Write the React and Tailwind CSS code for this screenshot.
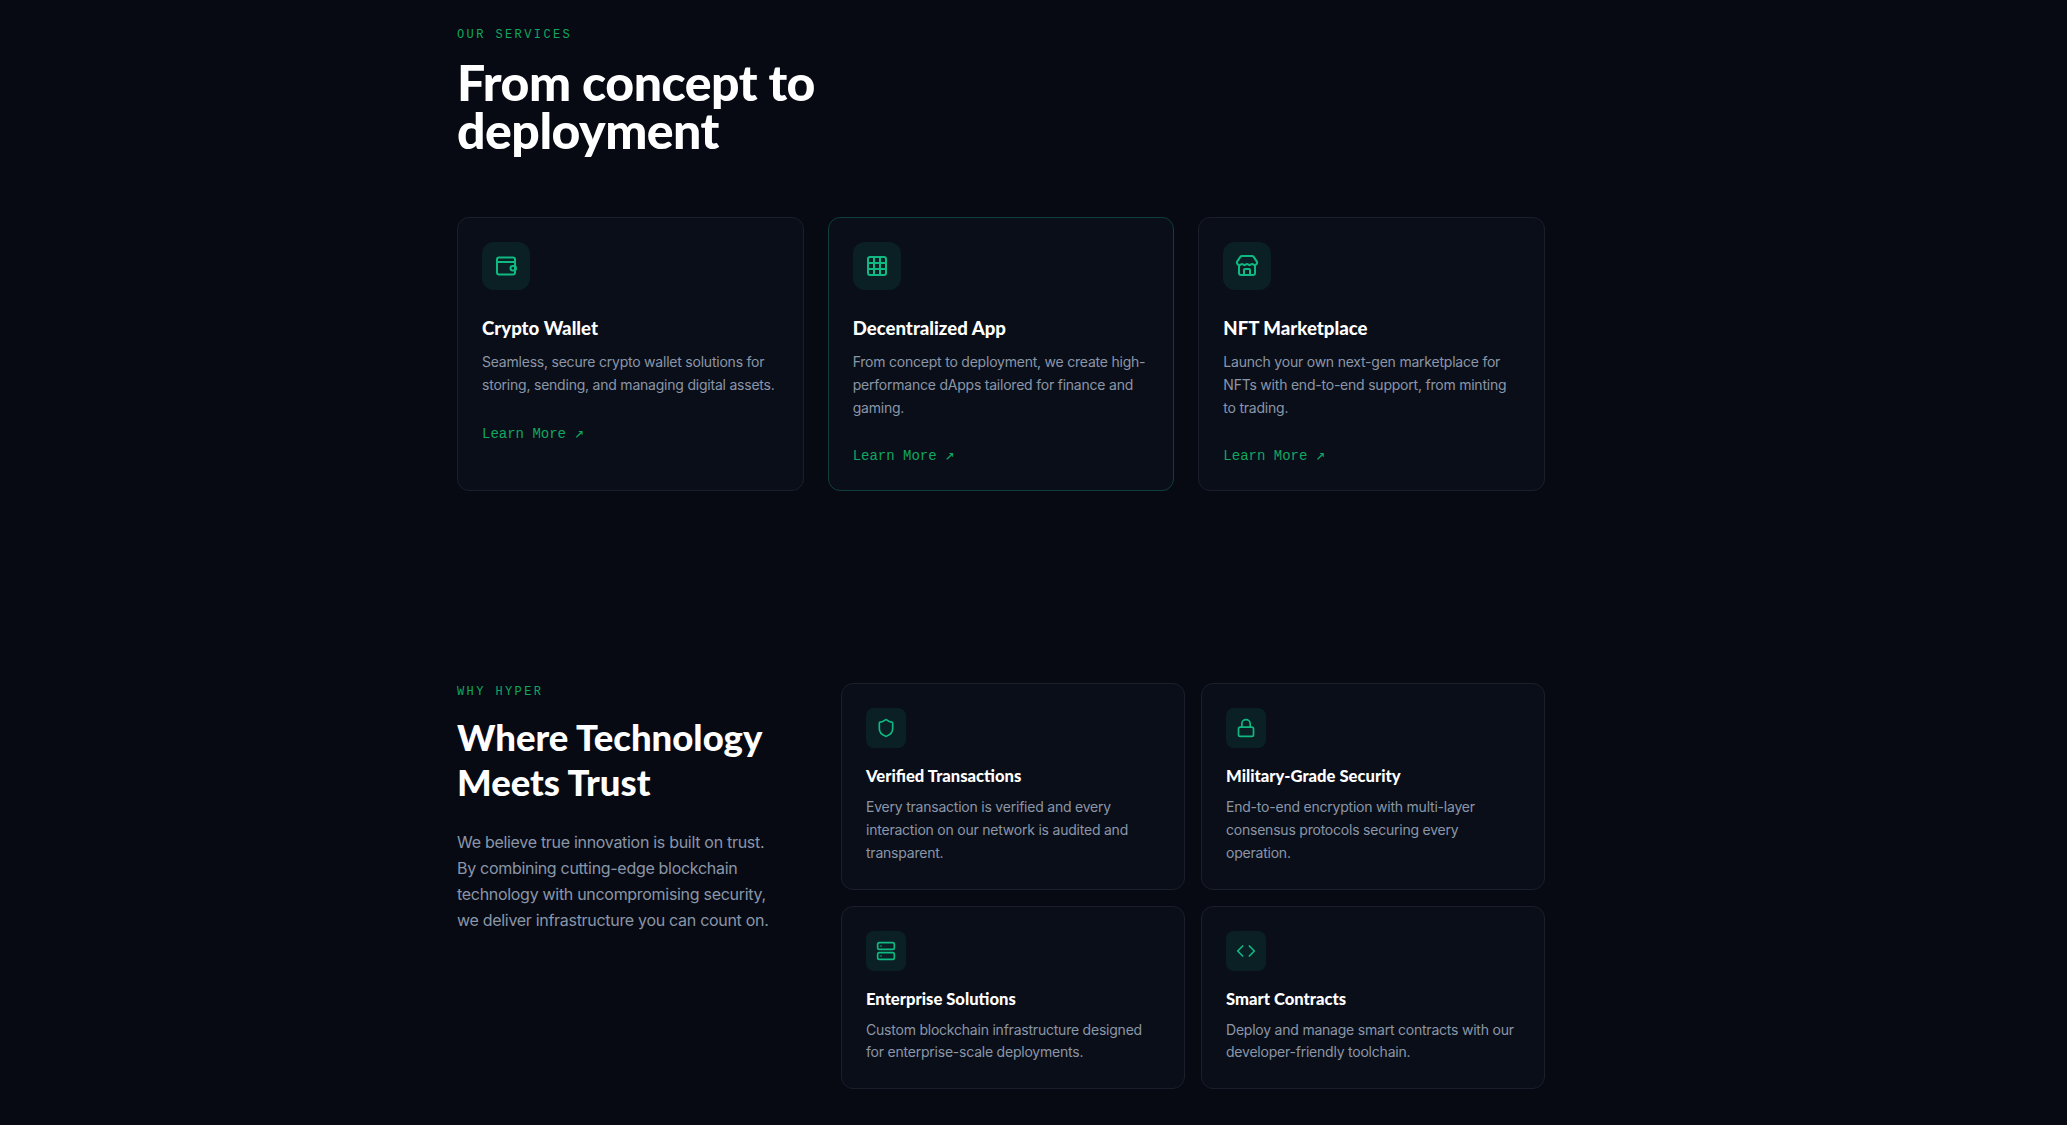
import { Grid3x3, Store, Shield, Lock, Server, Code } from 'lucide-react'

const headingFont = "font-['Lato',sans-serif]"

function WalletIcon({ className }) {
  return (
    <svg className={className} viewBox="0 0 24 24" fill="none" stroke="currentColor" strokeWidth={2} strokeLinecap="round" strokeLinejoin="round">
      <rect x="3" y="3.5" width="18" height="17" rx="2" />
      <path d="M3 8h18" />
      <rect x="16.5" y="12" width="5.5" height="4.5" rx="2.25" />
    </svg>
  )
}

const services = [
  {
    icon: WalletIcon,
    title: 'Crypto Wallet',
    text: 'Seamless, secure crypto wallet solutions for storing, sending, and managing digital assets.',
  },
  {
    icon: Grid3x3,
    title: 'Decentralized App',
    text: 'From concept to deployment, we create high-performance dApps tailored for finance and gaming.',
    active: true,
  },
  {
    icon: Store,
    title: 'NFT Marketplace',
    text: 'Launch your own next-gen marketplace for NFTs with end-to-end support, from minting\nto trading.',
  },
]

const reasons = [
  {
    icon: Shield,
    title: 'Verified Transactions',
    text: 'Every transaction is verified and every interaction on our network is audited and transparent.',
  },
  {
    icon: Lock,
    title: 'Military-Grade Security',
    text: 'End-to-end encryption with multi-layer consensus protocols securing every operation.',
  },
  {
    icon: Server,
    title: 'Enterprise Solutions',
    text: 'Custom blockchain infrastructure designed\nfor enterprise-scale deployments.',
  },
  {
    icon: Code,
    title: 'Smart Contracts',
    text: 'Deploy and manage smart contracts with our developer-friendly toolchain.',
  },
]

function Label({ children }) {
  return (
    <p className="font-['Liberation_Mono',monospace] text-xs leading-4 tracking-[0.2em] text-[#10a760]">
      {children}
    </p>
  )
}

function ServiceCard({ icon: Icon, title, text, active }) {
  return (
    <div
      className={`rounded-xl border bg-[#0a0e18] p-6 ${
        active ? 'border-[#0f3f3a]' : 'border-[#1a1f2b]'
      }`}
    >
      <div className="flex h-12 w-12 items-center justify-center rounded-xl bg-[#0a2025]">
        <Icon className="h-6 w-6 text-[#10b981]" />
      </div>
      <h3 className={`${headingFont} mt-6 text-[18.6px] font-black leading-7 text-white`}>{title}</h3>
      <p className="mt-[9px] whitespace-pre-line text-sm leading-[22.75px] tracking-[-0.22px] text-[#8a96a8]">{text}</p>
      <a className="mt-[27px] block font-['Liberation_Mono',monospace] text-sm leading-5 text-[#10a760]">
        Learn More <span className="font-['DejaVu_Sans_Mono',monospace] text-base leading-none">↗</span>
      </a>
    </div>
  )
}

function ReasonCard({ icon: Icon, title, text }) {
  return (
    <div className="rounded-xl border border-[#1a1f2b] bg-[#0a0e18] p-6">
      <div className="flex h-10 w-10 items-center justify-center rounded-lg bg-[#0a2025]">
        <Icon className="h-5 w-5 text-[#10b981]" />
      </div>
      <h3 className={`${headingFont} mt-4 text-[16.6px] font-black leading-6 text-white`}>{title}</h3>
      <p className="mt-2 whitespace-pre-line text-sm leading-[22.75px] tracking-[-0.22px] text-[#8a96a8]">{text}</p>
    </div>
  )
}

export default function App() {
  return (
    <div className="min-h-[1125px] bg-[#070a13] font-['Inter',sans-serif]">
      <div className="ml-[457px] w-[1088px]">
        <section className="pt-[27px] pb-24">
          <Label>OUR SERVICES</Label>
          <h2 className={`${headingFont} mt-[15px] text-[50px] font-black leading-[48px] tracking-[-0.01em] text-white`}>
            From concept to
            <br />
            deployment
          </h2>
          <div className="mt-[63px] grid grid-cols-3 gap-6">
            {services.map((s) => (
              <ServiceCard key={s.title} {...s} />
            ))}
          </div>
        </section>

        <section className="flex gap-12 pt-[96px] pb-10">
          <div className="w-[336px] shrink-0 pt-[1px]">
            <Label>WHY HYPER</Label>
            <h2 className={`${headingFont} mt-[15px] text-[36.5px] font-black leading-[45px] text-white`}>
              Where Technology
              <br />
              Meets Trust
            </h2>
            <p className="mt-6 text-base leading-[26px] tracking-[-0.3px] text-[#8a96a8]">
              We believe true innovation is built on trust.
              <br />
              By combining cutting-edge blockchain
              <br />
              technology with uncompromising security,
              <br />
              we deliver infrastructure you can count on.
            </p>
          </div>
          <div className="grid flex-1 grid-cols-2 gap-4">
            {reasons.map((r) => (
              <ReasonCard key={r.title} {...r} />
            ))}
          </div>
        </section>
      </div>
    </div>
  )
}
